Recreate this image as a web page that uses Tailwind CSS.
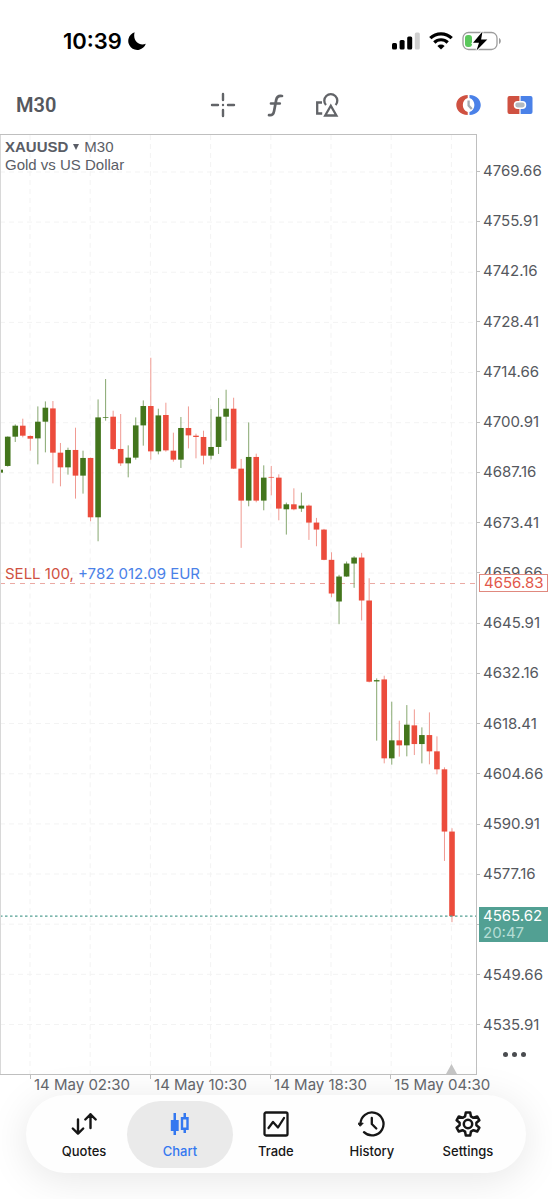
<!DOCTYPE html>
<html lang="en">
<head>
  <meta charset="UTF-8">
  <meta name="viewport" content="width=device-width, initial-scale=1.0">
  <script src="https://cdn.jsdelivr.net/npm/@tailwindcss/browser@4"></script>
  <title>XAUUSD M30</title>
</head>
<body class="bg-white font-['Inter',sans-serif] text-[#55585e]">
  <div class="flex min-h-screen flex-col">

    <!-- Status bar -->
    <div class="flex h-[76px] items-center justify-between pt-[6px] pr-[50px] pl-[63px] text-black">
      <div class="flex items-center gap-[6px]">
        <span class="text-[22px] leading-none font-semibold">10:39</span>
        <svg class="h-[18px] w-[18px]" viewBox="0 0 18 18" fill="currentColor"><path d="M6.600 .3A9 9 0 1 0 17.800 11.700C12 14.600 4.300 9.500 6.600 .3Z"/></svg>
      </div>
      <div class="flex items-center gap-[9px]">
        <svg class="h-[18px] w-[28px]" viewBox="0 0 28 18">
          <rect x="0" y="11" width="5" height="6.500" rx="1.500"/>
          <rect x="7.600" y="8" width="5" height="9.500" rx="1.500"/>
          <rect x="15.200" y="4.500" width="5" height="13" rx="1.500"/>
          <rect x="22.800" y="0.500" width="5" height="17" rx="1.500" fill="#cfcfcf"/>
        </svg>
        <svg class="h-[18px] w-[24px]" viewBox="0 0 24 18" fill="none" stroke="#000" stroke-width="3.200">
          <path d="M1.300 6.200a15.200 15.200 0 0 1 21.400 0"/>
          <path d="M5.300 10.500a9.500 9.500 0 0 1 13.400 0"/>
          <path d="M12 17.500l-3.600-3.500a5.200 5.200 0 0 1 7.200 0Z" fill="#000" stroke="none"/>
        </svg>
        <svg class="h-[20px] w-[40px]" viewBox="0 0 40 20">
          <rect x="1" y="1.500" width="34" height="17" rx="5.500" fill="none" stroke="#9c9c9c" stroke-width="1.300"/>
          <path d="M37 7v6c2.400-.8 2.400-5.200 0-6Z" fill="#9c9c9c"/>
          <rect x="3" y="4" width="7" height="12" rx="3" fill="#5bc85c"/>
          <path d="M20.500.5 11 11.800h6L14.500 19.500 25.300 8.400h-6.200Z" stroke="#fff" stroke-width="2" paint-order="stroke"/>
        </svg>
      </div>
    </div>

    <!-- Toolbar -->
    <div class="flex h-[58px] items-center pr-[19px] pl-[16px]">
      <button class="w-[194px] text-left font-['Roboto',sans-serif] text-[20px] leading-none font-semibold">M30</button>
      <div class="flex flex-1 items-center gap-[26px]">
        <button aria-label="Crosshair">
          <svg class="h-[26px] w-[26px]" viewBox="0 0 26 26" stroke="#626468" stroke-width="2.400" stroke-linecap="round"><path d="M13 2v6M13 18v6M2 13h6M18 13h6M13 13v.01"/></svg>
        </button>
        <button aria-label="Indicators">
          <svg class="h-[26px] w-[26px]" viewBox="0 0 26 26" fill="none" stroke="#626468" stroke-width="2.700" stroke-linecap="round"><path d="M20 4c-3.500-.6-5.100.6-5.800 3.900l-2.100 11c-.6 3.400-2 4.700-5.100 4.200M9 11.500h8.800"/></svg>
        </button>
        <button aria-label="Objects">
          <svg class="h-[26px] w-[26px]" viewBox="0 0 26 26" fill="none" stroke="#626468" stroke-width="2.300"><path d="M8 10.500H3.200v11h5M12 13a6.500 6.500 0 1 1 9.600 0"/><path d="M16.800 13.800 11.200 23.500h11.200Z"/></svg>
        </button>
      </div>
      <div class="flex items-center gap-[26px]">
        <button aria-label="Trading hours">
          <svg class="h-[26px] w-[25px]" viewBox="0 0 25 26">
            <path d="M11.700 3C-3.500 3.500-3.500 22.500 11.700 23v-3c-6.500-2-6.500-12 0-14Z" fill="#cf5141"/>
            <path d="M13.500 3c15 .5 15 19.500 0 20v-3c6.500-2 6.500-12 0-14Z" fill="#4a81e8"/>
            <path d="M12.600 8.500v5l3.200 3.500" fill="none" stroke="#a3abb2" stroke-width="2.300"/>
          </svg>
        </button>
        <button aria-label="One click trading">
          <svg class="h-[26px] w-[26px]" viewBox="0 0 26 26">
            <path d="M12.400 4H2.500A2 2 0 0 0 .5 6v14a2 2 0 0 0 2 2h9.900Z" fill="#cf5141"/>
            <path d="M13.600 4h9.900a2 2 0 0 1 2 2v14a2 2 0 0 1-2 2h-9.900Z" fill="#4a81e8"/>
            <rect x="7.500" y="9.800" width="11" height="6.400" rx="3.200" fill="#b3b9c0" stroke="#fff" stroke-width="1.500"/>
          </svg>
        </button>
      </div>
    </div>

    <!-- Chart and price axis -->
    <div class="flex h-[941px]">
      <div class="relative flex-1 border-t border-r border-b border-[#bfbfbf]">
        <svg id="chart" class="absolute inset-0 h-full w-full" viewBox="0 134 476 940" preserveAspectRatio="none"></svg>
        <div class="relative px-[5px] pt-[3px] font-['Liberation_Sans',sans-serif] text-[15px] leading-[18px] text-[#5a5d66]">
          <button class="flex items-center gap-[5px]">
            <b>XAUUSD</b>
            <svg class="h-[6px] w-[6px]" viewBox="0 0 6 6" fill="currentColor"><path d="M0 0h6L3 6Z"/></svg>
            M30
          </button>
          <p>Gold vs US Dollar</p>
        </div>
        <p class="absolute top-[430px] left-[5px] text-[15px] leading-[18px] text-[#4a81e8]"><span class="text-[#cf5141]">SELL 100,</span> +782 012.09 EUR</p>
      </div>

      <div class="relative w-[75px] text-[15px] leading-[20px]">
        <ul id="prices" class="flex h-full flex-col justify-between pt-[27px] pb-[40px]"></ul>
        <div class="absolute top-[440px] left-[2px] border border-[#e0897f] bg-white px-[4px] leading-[16px] text-[#e2574a]">4656.83</div>
        <div class="absolute top-[773px] left-[2px] w-[69px] bg-[#52a093] px-[4px] pb-[1px] leading-[17px] text-white">4565.62<br><span class="text-[#b5ddd5]">20:47</span></div>
        <button class="absolute right-[26px] bottom-[18px] flex gap-[4px]" aria-label="More">
          <span class="h-[5px] w-[5px] rounded-full bg-[#4a4c50]"></span>
          <span class="h-[5px] w-[5px] rounded-full bg-[#4a4c50]"></span>
          <span class="h-[5px] w-[5px] rounded-full bg-[#4a4c50]"></span>
        </button>
      </div>
    </div>

    <!-- Time axis -->
    <div class="flex h-[20px] items-start pl-[30px] text-[15px] leading-[20px] whitespace-nowrap text-[#65686d]">
      <div class="flex w-[23%] gap-[3px]"><span class="h-[4px] w-px bg-[#bfbfbf]"></span>14 May 02:30</div>
      <div class="flex w-[23%] gap-[3px]"><span class="h-[4px] w-px bg-[#bfbfbf]"></span>14 May 10:30</div>
      <div class="flex w-[23%] gap-[3px]"><span class="h-[4px] w-px bg-[#bfbfbf]"></span>14 May 18:30</div>
      <div class="flex w-[23%] gap-[3px]"><span class="h-[4px] w-px bg-[#bfbfbf]"></span>15 May 04:30</div>
    </div>

    <!-- Tab bar -->
    <nav class="mx-[26px] mb-[26px] flex h-[78px] items-center rounded-full bg-[#fefefe] px-[10px] text-[13px] leading-[16px] font-medium text-[#161616] shadow-[0_6px_40px_rgba(0,0,0,0.1)]">
      <a href="#" class="flex flex-1 flex-col items-center gap-[5px]">
        <svg class="h-[28px] w-[28px]" viewBox="0 0 28 28" fill="none" stroke="currentColor" stroke-width="2.400" stroke-linecap="round" stroke-linejoin="round"><path d="M8 9.500v14M2.800 18.500l5.200 5.200 5.200-5.200M20.500 18V4.300M15.300 9.500l5.200-5.200 5.200 5.200"/></svg>
        Quotes
      </a>
      <a href="#" class="-mx-[5px] flex h-[67px] flex-[1.1] flex-col items-center justify-center gap-[5px] rounded-full bg-[#eaeaea] text-[#3478f0]">
        <svg class="h-[28px] w-[28px]" viewBox="0 0 28 28" fill="currentColor"><path d="M7.500 3h2.500v7h2.700v11H10v4H7.500v-4H4.800V10h2.700Z"/><path d="M17.500 3H20v4h2.700v13H20v3h-2.500v-3h-2.700V7h2.700ZM17.200 9.400v8.200h3.100V9.400Z" fill-rule="evenodd"/></svg>
        Chart
      </a>
      <a href="#" class="flex flex-1 flex-col items-center gap-[5px]">
        <svg class="h-[28px] w-[28px]" viewBox="0 0 28 28" fill="none" stroke="currentColor" stroke-width="2.300" stroke-linecap="round" stroke-linejoin="round"><rect x="2.500" y="2.500" width="23" height="23" rx="1.500"/><path d="M6.500 18l4.500-6 5 5.500 6-9.500"/></svg>
        Trade
      </a>
      <a href="#" class="flex flex-1 flex-col items-center gap-[5px]">
        <svg class="h-[28px] w-[28px]" viewBox="0 0 28 28" fill="none" stroke="currentColor" stroke-width="2.300" stroke-linecap="round" stroke-linejoin="round"><path d="M2.500 14A11.500 11.500 0 1 1 6 22.200"/><path d="M0 13.200h5.200L2.500 16Z" fill="currentColor" stroke-width="1"/><path d="M13.800 8V14l4.500 4.500"/></svg>
        History
      </a>
      <a href="#" class="flex flex-1 flex-col items-center gap-[5px]">
        <svg class="h-[28px] w-[28px]" viewBox="0 0 28 28" fill="none" stroke="currentColor" stroke-width="2.500" stroke-linejoin="round"><path d="M11.800 2.500h4.400l.7 3.800 2.600 1.500 3.700-1.300 2.200 3.800-3 2.500v2.400l3 2.500-2.200 3.800-3.700-1.300-2.600 1.500-.7 3.800h-4.400l-.7-3.800-2.600-1.500-3.700 1.300-2.200-3.800 3-2.500v-2.400l-3-2.500 2.200-3.800 3.700 1.300 2.600-1.500Z"/><circle cx="14" cy="14" r="4.200"/></svg>
        Settings
      </a>
    </nav>
  </div>

  <script>
    // [up, high, body top, body bottom, low]
    const candles = [
      [1,468,469,472,473],[1,435.7,436,465.3,466],[1,423.7,425,436,441.3],[0,418,425,435,436.7],
      [0,434.7,435.3,438,450],[1,405.7,421,437.7,463.7],[1,400.7,407,421,451.7],[0,400.3,407.7,452,482.7],
      [0,442.3,452,466.7,485.7],[1,447,449.3,466.7,474],[0,427,449.3,475,498],[1,450,457.3,475,493],
      [0,457,457.3,516.7,520.7],[1,398.7,416.7,516.7,540.7],[1,378.3,416.3,417,420],[0,410,416,448.3,449.3],
      [0,413.3,448.3,462.7,465.3],[1,444.7,457,462.7,476.7],[1,416.7,424.7,457,459],[1,399.7,405.3,424.7,445],
      [0,357,405.3,450.7,459],[1,408,414.7,450.7,453.7],[0,402,414.3,449.7,451],[0,432,450,459,461],
      [1,416.3,427.3,459,467.3],[0,405.7,427.3,434.7,447.7],[0,433,435,436.3,457.7],[0,430,436.3,455,463.7],
      [1,408.3,446.3,455,458.7],[1,397.3,416,446.3,453.3],[1,389,408,416,440],[0,397,408,468,468.3],
      [0,458.3,468,500,547.3],[1,421.7,456.3,500,505.7],[0,453,456.3,500,501.7],[1,464.7,477,500,509.7],
      [0,465.3,476.3,477,494.7],[0,473.7,477,508,519.7],[1,502,503.7,508.7,534],[0,487.7,503.7,508.7,509.7],
      [1,492,505,508,511.3],[0,504,505,522,539.3],[0,517.3,522,529,545.7],[0,528.3,529,559.3,559.7],
      [0,551.7,559.3,593,596.7],[1,574.3,576,601,623.7],[1,561,563,576,576.3],[1,555.7,557,563,587.3],
      [0,552.3,557,600,620],[0,577.7,600,681.3,682],[1,678,679.7,681,740.3],[0,675.3,679,758,763],
      [1,701.3,740,758,764.3],[0,720.3,740,745,756.3],[1,704.7,724.3,745,756],[0,709,725,743.7,754.7],
      [1,727,734.7,743.7,763],[0,712,734.7,751,764],[0,736,751,769,774],[0,767,769,831.3,860.7],
      [0,828,831.3,916,922]
    ];

    let svg = '';

    // Grid
    for (let i = 0; i < 18; i++) {
      const y = 171 + i * 50.2;
      svg += `<path d="M0 ${y}H476" stroke="#f3f3f3" stroke-dasharray="5 4"/>`;
    }
    for (let i = 0; i < 8; i++) {
      const x = 30 + i * 60.2;
      svg += `<path d="M${x} 134V1074" stroke="#f3f3f3" stroke-dasharray="5 4"/>`;
    }

    // Open position line
    svg += '<path d="M0 583H476" stroke="#eba9a3" stroke-dasharray="5 5"/>';

    candles.forEach((c, i) => {
      const x = 0.2 + i * 7.53;
      const body = c[0] ? '#43751c' : '#ec4c3c';
      const wick = c[0] ? '#86a76e' : '#f09a92';
      svg += `<path d="M${x} ${c[1]}V${c[4]}" stroke="${wick}"/>`;
      svg += `<rect x="${x - 2.8}" y="${c[2]}" width="5.6" height="${c[3] - c[2]}" fill="${body}"/>`;
    });

    // Current price line and last bar marker
    svg += '<path d="M0 916H476" stroke="#52a093" stroke-width="1.4" stroke-dasharray="2.5 2.5"/>';
    svg += '<path d="M446 1074l5.5-10 5.5 10Z" fill="#c4c4c4"/>';
    svg += '<path d="M0.5 134V1074" stroke="#d8d8d8"/>';
    document.getElementById('chart').innerHTML = svg;

    // Price labels, skipping the one under the current price tag
    let labels = '';
    for (let i = 0; i < 18; i++) {
      const price = (4769.66 - i * 13.75).toFixed(2);
      labels += `<li class="flex h-[20px] items-center gap-[3px]"><span class="h-px w-[3px] bg-[#bfbfbf]"></span>${i === 15 ? '' : price}</li>`;
    }
    document.getElementById('prices').innerHTML = labels;
  </script>
</body>
</html>
